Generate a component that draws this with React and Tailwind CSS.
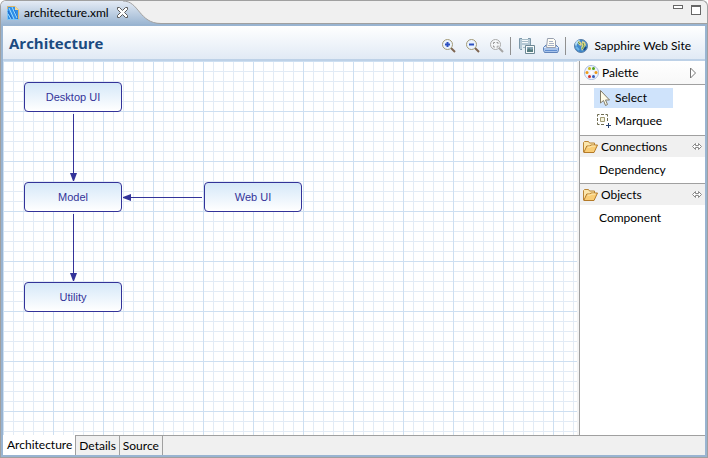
import React from "react";

function FileIcon() {
  return (
    <svg width="12" height="14" viewBox="0 0 12 14" aria-hidden="true">
      <path d="M.5.5H8L11.500 4v9.500H.5z" fill="#2f8fe8" stroke="#7cc4f5" />
      <path d="M1 5l4 8M7 4l4 9" stroke="#1c63c4" strokeWidth="1" />
      <path d="M1 8l3 5M2 2l5 11M5 1l5 11" stroke="#9ddcff" strokeWidth="1" />
      <path d="M.5 3V.5h7.500L11.500 4v9" fill="none" stroke="#d9b56c" />
      <path d="M8 0v4h4z" fill="#f5d898" />
    </svg>
  );
}

function CloseIcon() {
  return (
    <svg width="11" height="11" viewBox="0 0 11 11" aria-hidden="true">
      <path d="M.5.5h2l3 3 3-3h2v2l-3 3 3 3v2h-2l-3-3-3 3h-2v-2l3-3-3-3z" fill="#fff" stroke="#5c5c5c" />
    </svg>
  );
}

function ZoomIcon({ kind }) {
  const off = kind === "fit";
  return (
    <svg width="14" height="14" viewBox="0 0 14 14" aria-hidden="true">
      <path d="M9 9l4 4" stroke={off ? "#a5a5a5" : "#7d6450"} strokeWidth="2" />
      <circle cx="5.500" cy="5.500" r="5" fill={off ? "#f4f6f8" : "#eaf3fd"} stroke={off ? "#a9a9a9" : "#a39a76"} />
      {off ? (
        <path d="M3.500 5V3.500H5M6.500 3.500H8V5M8 6.500V8H6.500M5 8H3.500V6.500" fill="none" stroke="#9a9a9a" />
      ) : (
        <path d={kind === "in" ? "M3 5.500h5M5.500 3v5" : "M3 5.500h5"} stroke="#2c50c0" strokeWidth="2" />
      )}
    </svg>
  );
}

function SaveImageIcon() {
  return (
    <svg width="16" height="16" viewBox="0 0 16 16" aria-hidden="true">
      <path d="M.5.500h11v11h-10l-1-1z" fill="#b4c8d4" stroke="#7c98aa" />
      <path d="M3 0h6v5H3z" fill="#f5f9fb" />
      <path d="M3 7h6v5H3z" fill="#e6eff3" />
      <path d="M3 1.500h6M3 3.500h6M4 9.500h3" stroke="#a5bbc7" />
      <path d="M6.500 7.500h9v8h-9z" fill="#f8fbfb" stroke="#6c8794" />
      <path d="M8 9h6v5H8z" fill="#86a5b4" />
      <path d="M8 12l2-2 2 2 2-1v3H8z" fill="#567d80" />
    </svg>
  );
}

function PrintIcon() {
  return (
    <svg width="16" height="15" viewBox="0 0 16 15" aria-hidden="true">
      <path d="M3 7h10l2.500 2.500v3l-1 2h-13l-1-2v-3z" fill="#a9c4ea" stroke="#5f83ba" />
      <path d="M1 9.500h14" stroke="#dce9fa" />
      <path d="M4.500.5h6l2 2v7h-9z" fill="#fffdf4" stroke="#98a0b0" />
      <path d="M6 3.500h4M6 5.500h5M5 7.500h6" stroke="#a7b2c6" />
      <path d="M2 12.500h12" stroke="#5f8dd0" />
    </svg>
  );
}

function GlobeIcon() {
  return (
    <svg width="14" height="14" viewBox="0 0 14 14" aria-hidden="true">
      <circle cx="7" cy="7" r="6.500" fill="#3f88cc" stroke="#5b7fa6" />
      <path d="M1 5Q2 1 6 1L5 3 3 5 2 8z" fill="#b8e0f4" />
      <path d="M4 2l3 1 1 2-1 2-2-1-1-2zM8 2l3 1 1 3-2 3-2 3-1-3 1-3z" fill="#d9d28a" />
      <path d="M4 3l2 2M9 4l1 3-2 3" fill="none" stroke="#5f9a52" />
      <path d="M2 8l3 3" stroke="#6db5e6" strokeWidth="2" />
      <path d="M10 11l2-3" stroke="#174b87" strokeWidth="2" />
    </svg>
  );
}

function PaletteIcon() {
  return (
    <svg width="15" height="15" viewBox="0 0 15 15" aria-hidden="true">
      <path d="M7 .5c4 0 7.500 3 7.500 7s-3 7-7 7-7-3-7-6.500S3 .5 7 .5z" fill="#edf3fc" stroke="#a8bbdc" />
      <circle cx="5.500" cy="3.500" r="1.500" fill="#c9b81a" />
      <circle cx="9.500" cy="3.500" r="1.500" fill="#55a51c" />
      <circle cx="3" cy="7.500" r="1.500" fill="#ee9a16" />
      <circle cx="12" cy="7.500" r="1.500" fill="#ee9a16" />
      <circle cx="5.500" cy="11.500" r="1.500" fill="#d3322b" />
      <circle cx="9.500" cy="11.500" r="1.500" fill="#3159b8" />
      <circle cx="7.500" cy="7.500" r="1.500" fill="#fff" />
    </svg>
  );
}

function CursorIcon() {
  return (
    <svg width="16" height="16" viewBox="0 0 16 16" aria-hidden="true">
      <path d="M4.500.5v12.500l3-2.500 2 5 2-1-2-4.500h4z" fill="#fffce8" stroke="#817b68" />
    </svg>
  );
}

function MarqueeIcon() {
  return (
    <svg width="16" height="16" viewBox="0 0 16 16" aria-hidden="true">
      <path d="M1.500 3.500v-2h2M5 1.500h3M9.500 1.500h2v2M11.500 5v3M1.500 5v3M1.500 9.500v2h2M5 11.500h3" fill="none" stroke="#6d6a4e" />
      <path d="M4.500 4.500h4v4h-4z" fill="#f5f3dc" stroke="#a09b75" />
      <path d="M10 12.500h5M12.500 10v5" stroke="#26406f" />
    </svg>
  );
}

function FolderIcon() {
  return (
    <svg width="15" height="12" viewBox="0 0 15 12" aria-hidden="true">
      <path d="M.5 11V1.500l1-1h4l1 1.500h5v3" fill="#fbe6ac" stroke="#b98536" />
      <path d="M.8 11.500l3-6.500h3l1-1h6.700l-3.500 7.500z" fill="#f9cd76" stroke="#b47a28" />
      <path d="M4.500 6h3l1-1h4" fill="none" stroke="#fff0bd" />
    </svg>
  );
}

function PinIcon() {
  return (
    <svg width="10" height="7" viewBox="0 0 10 7" aria-hidden="true">
      <path d="M3.500.5l-3 3 3 3M6.500.5l3 3-3 3M3.500.5v2h3v-2M3.500 6.500v-2h3v2" fill="#fff" stroke="#8a8a8a" />
    </svg>
  );
}

const nodes = [
  { label: "Desktop UI", place: "left-[21px] top-[21px]" },
  { label: "Model", place: "left-[21px] top-[121px]" },
  { label: "Web UI", place: "left-[201px] top-[121px]" },
  { label: "Utility", place: "left-[21px] top-[221px]" },
];

function Diagram() {
  return (
    <main className="relative min-w-0 flex-1 overflow-hidden border-r-2 border-[#f4f4f4] bg-white">
      <svg className="absolute inset-0 h-full w-full" aria-hidden="true">
        <defs>
          <pattern id="minor" width="10" height="10" patternUnits="userSpaceOnUse">
            <path d="M.5 0v10M0 .5h10" stroke="#e2ebf5" />
          </pattern>
          <pattern id="major" width="50" height="50" patternUnits="userSpaceOnUse">
            <path d="M.5 0v50M0 .5h50" stroke="#cddff1" />
          </pattern>
        </defs>
        <rect width="100%" height="100%" fill="url(#minor)" />
        <rect width="100%" height="100%" fill="url(#major)" />
        <g stroke="#333399">
          <path d="M70.500 53v60M70.500 153v60M127 136.500h72" />
        </g>
        <g fill="#333399">
          <path d="M67 112h7l-3 8h-1zM67 212h7l-3 8h-1zM128 133v7l-8-3v-1z" />
        </g>
      </svg>
      {nodes.map((n) => (
        <div
          key={n.label}
          className={`absolute flex h-[30px] w-[98px] items-center justify-center rounded border border-[#333399] bg-linear-to-b from-[#d5e8f8] to-white font-['Liberation_Sans',Arial,sans-serif] text-[11px] text-[#333399] ${n.place}`}
        >
          {n.label}
        </div>
      ))}
    </main>
  );
}

function Drawer({ title, item }) {
  return (
    <section>
      <button className="flex h-[22px] w-full items-center border-t border-[#a0a0a0] bg-[#f0f0f0] pr-[3px] pl-[3px]">
        <FolderIcon />
        <span className="ml-[3px] flex-1 text-left">{title}</span>
        <PinIcon />
      </button>
      <button className="flex h-[26px] w-full items-center pl-[19px]">{item}</button>
    </section>
  );
}

function Palette() {
  return (
    <aside className="w-[126px] shrink-0 border-l border-[#a0a0a0] bg-white">
      <button className="flex h-6 w-full items-center border-b border-[#a0a0a0] bg-linear-to-b from-white to-[#f8f8f8] pr-2 pl-1">
        <PaletteIcon />
        <span className="ml-[3px] flex-1 text-left">Palette</span>
        <svg width="8" height="12" viewBox="0 0 8 12" aria-hidden="true">
          <path d="M1.500 1v10l5-5z" fill="#fff" stroke="#777" />
        </svg>
      </button>
      <div className="flex h-[50px] flex-col pt-[3px] pl-[14px]">
        <button className="flex h-5 w-[79px] items-center gap-[3px] bg-[#cfe3fb] pl-[2px]">
          <CursorIcon />
          Select
        </button>
        <button className="mt-[3px] flex h-5 items-center gap-[3px] pl-[2px]">
          <MarqueeIcon />
          Marquee
        </button>
      </div>
      <Drawer title="Connections" item="Dependency" />
      <Drawer title="Objects" item="Component" />
    </aside>
  );
}

function TabStrip() {
  return (
    <div className="relative flex h-6 shrink-0 items-center overflow-hidden rounded-t-md border border-b-0 border-[#a0a0a0] bg-[#f0f0f0] shadow-[inset_0_-1px_0_#a0a0a0]">
      <svg className="absolute top-0 left-0" width="162" height="24" viewBox="0 0 162 24" aria-hidden="true">
        <defs>
          <linearGradient id="tab" x2="0" y2="1">
            <stop offset="0" stopColor="#e4ebf5" />
            <stop offset="1" stopColor="#99b4d1" />
          </linearGradient>
        </defs>
        <path d="M0 0H122C138 0 138 22.500 160 22.500V24H0z" fill="url(#tab)" />
        <path d="M122 0C138 0 138 22.500 160 22.500h2" fill="none" stroke="#a0a0a0" />
      </svg>
      <div className="relative flex items-center pl-[6px]">
        <FileIcon />
        <span className="ml-[5px]">architecture.xml</span>
        <button aria-label="Close" className="ml-2">
          <CloseIcon />
        </button>
      </div>
      <div className="ml-auto flex items-start gap-2 self-start pt-1 pr-[6px]">
        <button aria-label="Minimize" className="h-1 w-[10px] border border-[#666] bg-white" />
        <button aria-label="Maximize" className="h-[10px] w-[10px] border border-t-2 border-[#666] bg-white" />
      </div>
    </div>
  );
}

function Header() {
  return (
    <header className="flex h-[35px] shrink-0 items-center border-b-2 border-[#bdd1e7] bg-linear-to-b from-white to-[#e1eaf5] pr-[14px] pl-[6px]">
      <h1 className="flex-1 font-['Open_Sans','Noto_Sans',sans-serif] text-[15px] font-bold text-[#1b4a80]">Architecture</h1>
      <div className="flex items-center pt-[6px]">
        <div className="flex gap-[10px]">
          <button aria-label="Zoom in"><ZoomIcon kind="in" /></button>
          <button aria-label="Zoom out"><ZoomIcon kind="out" /></button>
          <button aria-label="Zoom to fit" disabled><ZoomIcon kind="fit" /></button>
        </div>
        <span className="mr-2 ml-[6px] h-[18px] w-px bg-[#909090]" />
        <div className="flex items-center gap-2">
          <button aria-label="Save as image"><SaveImageIcon /></button>
          <button aria-label="Print"><PrintIcon /></button>
        </div>
        <span className="mr-2 ml-[6px] h-[18px] w-px bg-[#909090]" />
        <a href="#site" className="flex items-center gap-[6px]">
          <GlobeIcon />
          Sapphire Web Site
        </a>
      </div>
    </header>
  );
}

function PageTabs() {
  return (
    <nav className="flex h-5 shrink-0 bg-[#f0f0f0]">
      <button className="border-r border-[#a0a0a0] bg-white pr-[3px] pl-1">Architecture</button>
      <button className="border-t border-r border-[#a0a0a0] px-[3px]">Details</button>
      <button className="border-t border-r border-[#a0a0a0] px-[3px]">Source</button>
      <span className="flex-1 border-t border-[#a0a0a0]" />
    </nav>
  );
}

export default function App() {
  return (
    <div className="flex h-screen flex-col bg-white font-['Lato','Open_Sans',sans-serif] text-[12px] leading-4 text-black">
      <TabStrip />
      <div className="flex min-h-0 flex-1 flex-col border-x border-b border-[#a0a0a0]">
        <div className="flex min-h-0 flex-1 flex-col border-2 border-[#99b4d1]">
          <Header />
          <div className="flex min-h-0 flex-1">
            <Diagram />
            <Palette />
          </div>
          <PageTabs />
        </div>
      </div>
    </div>
  );
}
